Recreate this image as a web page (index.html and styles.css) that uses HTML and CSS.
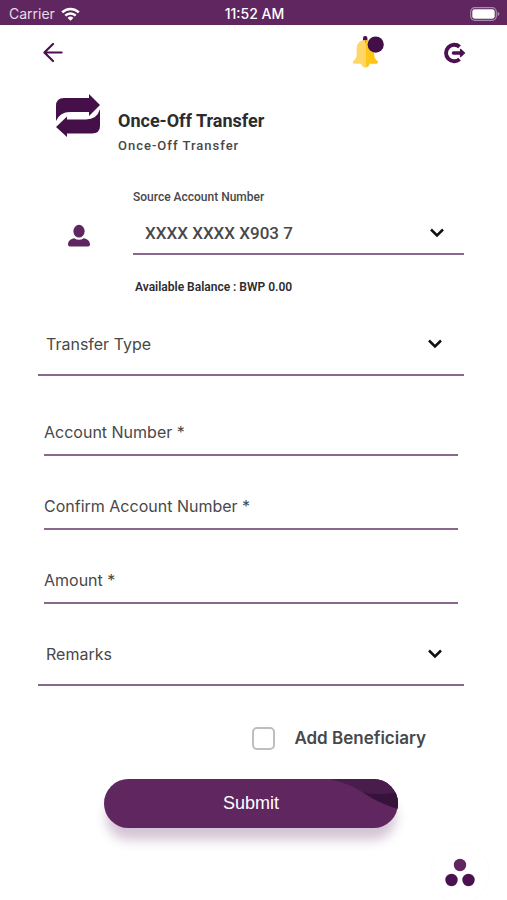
FILE: index.html
```html
<!DOCTYPE html>
<html lang="en">
<head>
<meta charset="utf-8">
<meta name="viewport" content="width=device-width, initial-scale=1">
<title>Once-Off Transfer</title>
<link rel="stylesheet" href="styles.css">
</head>
<body>
<div class="status">
  <div class="carrier">
    <span>Carrier</span>
    <svg width="19" height="14" viewBox="0 0 19 14" aria-hidden="true">
      <g fill="none" stroke="#fff" stroke-width="2.6">
        <path d="M1.2 5.4A11.8 11.8 0 0 1 17.8 5.4"/>
        <path d="M4.3 8.6A7.4 7.4 0 0 1 14.7 8.6"/>
      </g>
      <path fill="#fff" d="M6.6 10.9A4.1 4.1 0 0 1 12.4 10.9L9.5 13.8Z"/>
    </svg>
  </div>
  <span class="clock">11:52 AM</span>
  <svg class="battery" width="30" height="14" viewBox="0 0 30 14" aria-hidden="true">
    <rect x=".7" y=".7" width="25.6" height="12.6" rx="4" fill="none" stroke="#a98bab" stroke-width="1.2"/>
    <rect x="2.3" y="2.3" width="22.4" height="9.4" rx="2.4" fill="#fff"/>
    <path fill="#a98bab" d="M27.6 4.8Q29.4 5.4 29.4 7T27.6 9.2Z"/>
  </svg>
</div>

<header class="topbar">
  <button class="icon-button" type="button" aria-label="Back">
    <svg width="20" height="20" viewBox="0 0 20 20">
      <path d="M18.6 9.500H1.600M10 1L1.400 9.500L10 18" fill="none" stroke="#4b1150" stroke-width="2.2" stroke-linecap="round" stroke-linejoin="round"/>
    </svg>
  </button>
  <div class="actions">
    <button class="icon-button" type="button" aria-label="Notifications">
      <svg width="32" height="34" viewBox="0 0 32 34">
        <rect x="11" y="0" width="4.4" height="7" rx="2" fill="#4b1150"/>
        <path fill="#ffd768" d="M13.4 4C7.4 4 4.6 8 4.6 13V18C4.6 21.4 3.8 23 1.4 25C.2 26.4.8 27.8 2.4 27.8H9.2C9.6 30.2 11 31.6 13.4 31.6Z"/>
        <path fill="#ffc616" d="M13.4 4C19.4 4 22.2 8 22.2 13V18C22.2 21.4 23 23 25.4 25C26.6 26.4 26 27.8 24.4 27.8H17.6C17.2 30.2 15.8 31.6 13.4 31.6Z"/>
        <circle cx="23.7" cy="8.6" r="8.1" fill="#430f49"/>
      </svg>
    </button>
    <button class="icon-button" type="button" aria-label="Log out">
      <svg width="22" height="22" viewBox="0 0 22 22">
        <path d="M15.6 4.8A8.2 8.2 0 1 0 15.6 17.2" fill="none" stroke="#4b1150" stroke-width="3.9"/>
        <path d="M9.4 11H17" stroke="#4b1150" stroke-width="3.4" stroke-linecap="round"/>
        <path d="M16.6 7.4L20.4 11L16.6 14.6Z" fill="#4b1150" stroke="#4b1150" stroke-width="1.4" stroke-linejoin="round"/>
      </svg>
    </button>
  </div>
</header>

<main>
  <div class="heading">
    <svg width="46" height="44" viewBox="0 0 46 44" aria-hidden="true">
      <path fill="#45104a" d="M1 27V12Q1 4 9 4H34V0L45 11L34 22V18H15Q5 18 1 27Z"/>
      <path fill="#45104a" d="M45 15V32Q45 39.500 37 39.500H12V43L1 33L12 22.500V25.500H31Q42 25.500 45 15Z"/>
    </svg>
    <div>
      <h1>Once-Off Transfer</h1>
      <p>Once-Off Transfer</p>
    </div>
  </div>

  <form>
    <section class="source">
      <svg class="person" width="22" height="24" viewBox="0 0 22 24" aria-hidden="true">
        <ellipse cx="11" cy="7.200" rx="5.600" ry="6.400" fill="#5f265f"/>
        <path fill="#5f265f" d="M0 20.500C0 16.600 3 14.800 6.200 14.200Q11 17.400 15.800 14.200C19 14.800 22 16.600 22 20.500Q22 22.600 20 22.600H2Q0 22.600 0 20.500Z"/>
      </svg>
      <div class="source-body">
        <label for="source">Source Account Number</label>
        <div class="picker account">
          <select id="source"><option>XXXX XXXX X903 7</option></select>
          <svg class="chevron" width="16" height="10" viewBox="0 0 16 10" aria-hidden="true"><path d="M2 1.500L8 7.500L14 1.500"/></svg>
        </div>
        <p class="balance">Available Balance : BWP 0.00</p>
      </div>
    </section>

    <div class="picker type">
      <select aria-label="Transfer Type"><option>Transfer Type</option></select>
      <svg class="chevron" width="16" height="10" viewBox="0 0 16 10" aria-hidden="true"><path d="M2 1.500L8 7.500L14 1.500"/></svg>
    </div>

    <div class="fields">
      <div class="field">
        <label for="number">Account Number *</label>
        <input id="number" type="text" required>
      </div>
      <div class="field">
        <label for="confirm">Confirm Account Number *</label>
        <input id="confirm" type="text" required>
      </div>
      <div class="field">
        <label for="amount">Amount *</label>
        <input id="amount" type="text" required>
      </div>
    </div>

    <div class="picker">
      <select aria-label="Remarks"><option>Remarks</option></select>
      <svg class="chevron" width="16" height="10" viewBox="0 0 16 10" aria-hidden="true"><path d="M2 1.500L8 7.500L14 1.500"/></svg>
    </div>

    <div class="beneficiary">
      <input id="beneficiary" type="checkbox">
      <label for="beneficiary">Add Beneficiary</label>
    </div>

    <button class="submit" type="submit">
      <svg width="80" height="30" viewBox="0 0 80 30" aria-hidden="true">
        <path fill="#481c4b" d="M12 0H80V30Q62 24 46 14Q30 4 12 0Z"/>
        <path fill="#37133b" d="M45 13.500Q62 17 80 13V30Q62 25 45 13.500Z"/>
      </svg>
      <span>Submit</span>
    </button>
  </form>
</main>

<button class="menu" type="button" aria-label="Menu">
  <svg width="32" height="30" viewBox="0 0 32 30">
    <circle cx="16" cy="7" r="6.200" fill="#5f265f"/>
    <circle cx="7.500" cy="22" r="6.200" fill="#4b1150"/>
    <circle cx="24.500" cy="22" r="6.200" fill="#4b1150"/>
  </svg>
</button>
</body>
</html>
```
FILE: styles.css
```css
* {
  box-sizing: border-box;
}

body {
  margin: 0;
  min-height: 100vh;
  background: #fff;
  color: #48484a;
  font-family: Inter, "Liberation Sans", sans-serif;
  font-size: 16px;
}

h1,
p {
  margin: 0;
}

button,
input,
select {
  margin: 0;
  padding: 0;
  border: 0;
  background: none;
  color: inherit;
  font: inherit;
}

svg {
  display: block;
}

.status {
  display: grid;
  grid-template-columns: 1fr auto 1fr;
  align-items: center;
  height: 25px;
  padding: 2px 7px 0 9px;
  background: #5f265f;
  color: #fff;
  font-size: 14px;
}

.carrier {
  display: flex;
  align-items: center;
  gap: 6px;
  color: #e6dce7;
}

.clock {
  font-weight: 500;
  letter-spacing: 0;
}

.battery {
  justify-self: end;
}

.topbar {
  display: flex;
  align-items: center;
  justify-content: space-between;
  height: 55px;
  padding: 0 41px 0 43px;
}

.actions {
  display: flex;
  align-items: center;
  gap: 60px;
}

main {
  padding: 14px 43px 0 38px;
}

.heading {
  display: flex;
  gap: 17px;
  padding-left: 17px;
  font-family: Roboto, sans-serif;
}

.heading > div {
  padding-top: 14px;
}

h1 {
  color: #2c2c2e;
  font-size: 18px;
  font-weight: 700;
  line-height: 26px;
}

.heading p {
  font-size: 13px;
  font-weight: 500;
  line-height: 24px;
  letter-spacing: 1px;
}

.source {
  display: flex;
  gap: 43px;
  margin-top: 31px;
  padding-left: 30px;
  font-family: Roboto, sans-serif;
}

.person {
  margin-top: 35px;
}

.source-body {
  flex: 1;
}

.source-body label {
  display: block;
  font-size: 12px;
  font-weight: 500;
  line-height: 16px;
}

.picker {
  display: grid;
  align-items: center;
  height: 64px;
  padding-top: 2px;
  border-bottom: 2px solid #8a688e;
}

.picker > * {
  grid-area: 1 / 1;
}

.picker select {
  width: 100%;
  height: 100%;
  padding-left: 8px;
  appearance: none;
}

.chevron {
  justify-self: end;
  margin-right: 21px;
  fill: none;
  stroke: #111;
  stroke-width: 2.5;
  pointer-events: none;
}

.account {
  height: 50px;
  padding-top: 8px;
}

.account select {
  padding-left: 12px;
  font-size: 17px;
  font-weight: 500;
}

.account .chevron {
  margin-right: 19px;
}

.balance {
  padding: 24px 0 0 2px;
  color: #2c2c2e;
  font-size: 12px;
  font-weight: 600;
  line-height: 16px;
}

.type {
  margin-top: 17px;
}

.fields {
  display: grid;
  gap: 26px;
  margin: 32px 6px 18px;
}

.field {
  display: grid;
  align-items: center;
  height: 48px;
  padding-top: 2px;
  border-bottom: 2px solid #8a688e;
}

.field > * {
  grid-area: 1 / 1;
}

.field input {
  width: 100%;
  height: 100%;
}

.beneficiary {
  display: flex;
  align-items: center;
  justify-content: flex-end;
  gap: 19px;
  height: 24px;
  margin: 40px 38px 29px 0;
  font-size: 17px;
  font-weight: 600;
}

.beneficiary input {
  width: 23px;
  height: 23px;
  border: 2px solid #bebec0;
  border-radius: 5px;
  appearance: none;
}

.beneficiary input:checked {
  background: #5f265f;
}

.submit {
  display: grid;
  align-items: center;
  justify-items: center;
  width: 69%;
  height: 49px;
  margin: 0 auto;
  overflow: hidden;
  border-radius: 25px;
  background: #5f265f;
  box-shadow: 0 14px 12px -2px #d5c5d6;
  color: #fff;
  font-family: "Liberation Sans", sans-serif;
  font-size: 18px;
}

.submit > * {
  grid-area: 1 / 1;
}

.submit svg {
  align-self: start;
  justify-self: end;
}

.menu {
  position: fixed;
  right: 18px;
  bottom: -2px;
  display: grid;
  place-items: center;
  width: 58px;
  height: 58px;
  border-radius: 50%;
  background: #fff;
  box-shadow: 0 0 3px #f4f8f8;
}
```
